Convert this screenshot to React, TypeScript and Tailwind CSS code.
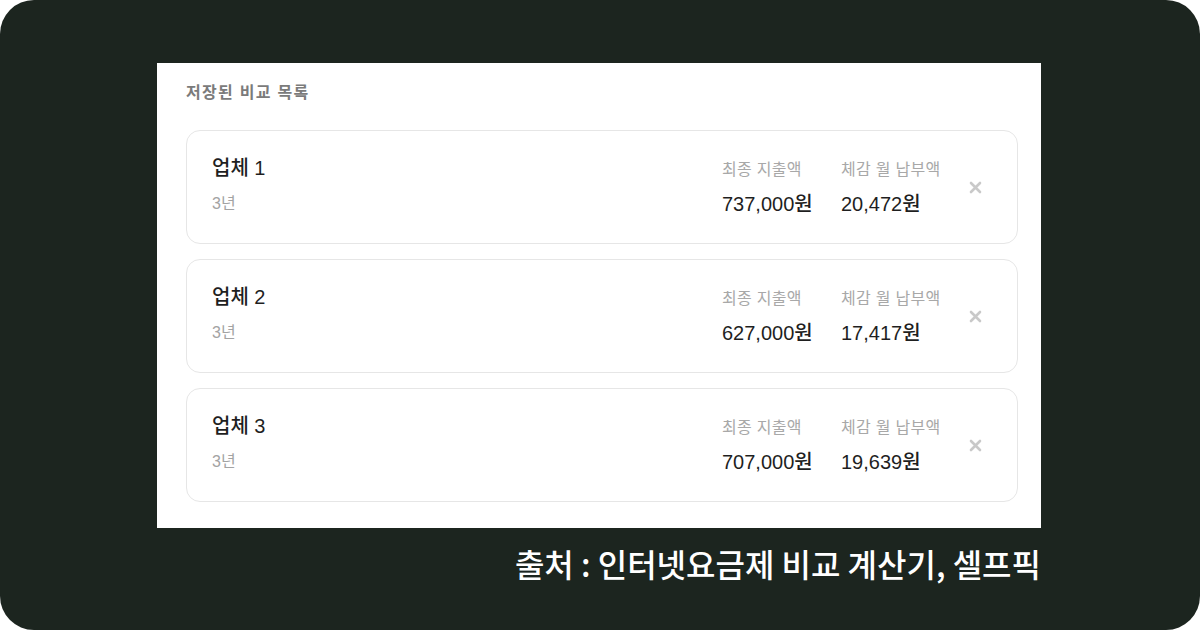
const items = [
  { name: "업체 1", period: "3년", total: "737,000원", monthly: "20,472원" },
  { name: "업체 2", period: "3년", total: "627,000원", monthly: "17,417원" },
  { name: "업체 3", period: "3년", total: "707,000원", monthly: "19,639원" },
]

function CloseIcon() {
  return (
    <svg width="13" height="13" viewBox="0 0 13 13" className="text-[#c9c9c9]">
      <path d="M2 2L11 11M11 2L2 11" stroke="currentColor" strokeWidth="2.6" strokeLinecap="round" />
    </svg>
  )
}

export default function App() {
  return (
    <div
      className="w-[1200px] h-[630px] bg-white"
      style={{ fontFamily: '"Liberation Sans", "Noto Sans CJK KR", sans-serif' }}
    >
      <div className="w-full h-full rounded-[34px] bg-[#1c251f] pt-[63px] pl-[157px]">
        <div className="w-[884px] h-[465px] bg-white pl-[29px] pr-[23px] pt-[18px]">
          <h2 className="text-[16px] leading-[24px] font-semibold tracking-[1.3px] text-[#7b7b7b] mb-[25px]">저장된 비교 목록</h2>
          <div className="flex flex-col gap-[15px]">
            {items.map(item => (
              <div
                key={item.name}
                className="h-[114px] rounded-[14px] border border-[#e6e6e6] flex items-center pl-[25px] pr-[35px]"
              >
                <div className="flex flex-col -mt-[6px]">
                  <span className="text-[20px] leading-[28px] font-medium text-[#1f1f1f]">{item.name}</span>
                  <span className="text-[16px] leading-[20px] text-[#a3a3a3] mt-[12px]">{item.period}</span>
                </div>
                <div className="ml-auto flex items-center mt-[3px]">
                  <div className="w-[119px] flex flex-col whitespace-nowrap">
                    <span className="text-[16px] leading-[20px] tracking-[0.3px] text-[#a8a8a8]">최종 지출액</span>
                    <span className="text-[20px] leading-[26px] font-medium text-[#1f1f1f] mt-[11px]">{item.total}</span>
                  </div>
                  <div className="w-[101px] flex flex-col whitespace-nowrap">
                    <span className="text-[16px] leading-[20px] tracking-[0.3px] text-[#a8a8a8]">체감 월 납부액</span>
                    <span className="text-[20px] leading-[26px] font-medium text-[#1f1f1f] mt-[11px]">{item.monthly}</span>
                  </div>
                  <div className="ml-[27px] -mt-[3px]">
                    <CloseIcon />
                  </div>
                </div>
              </div>
            ))}
          </div>
        </div>
        <p
          className="w-[884px] text-right text-white text-[32px] leading-[44px] font-medium mt-[13px]"
          style={{ fontFamily: '"Noto Sans CJK KR", sans-serif' }}
        >
          출처 : 인터넷요금제 비교 계산기, 셀프픽
        </p>
      </div>
    </div>
  )
}
